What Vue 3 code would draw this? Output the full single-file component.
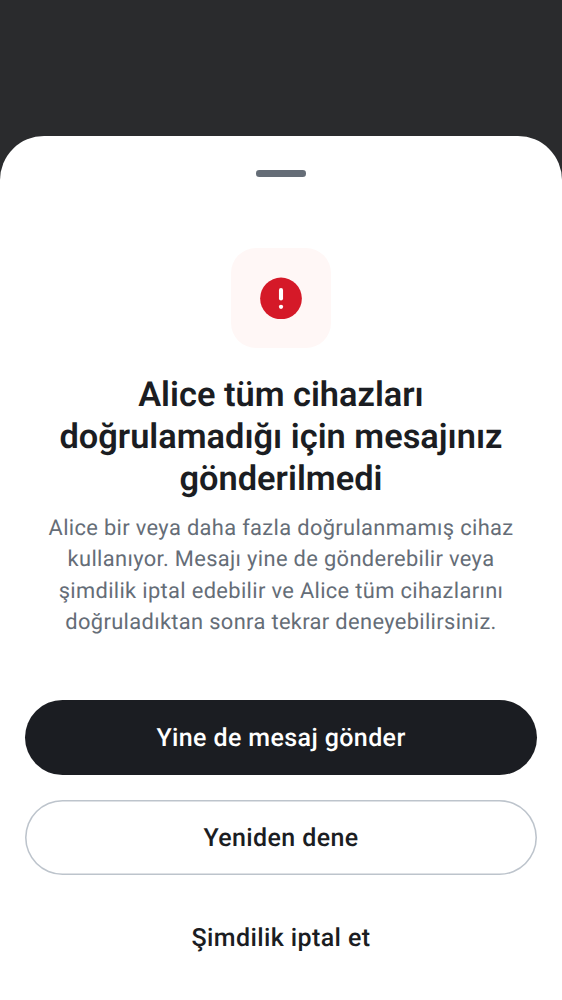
<script setup>
const titleLines = ['Alice tüm cihazları', 'doğrulamadığı için mesajınız', 'gönderilmedi']
const bodyLines = [
  'Alice bir veya daha fazla doğrulanmamış cihaz',
  'kullanıyor. Mesajı yine de gönderebilir veya',
  'şimdilik iptal edebilir ve Alice tüm cihazlarını',
  'doğruladıktan sonra tekrar deneyebilirsiniz.',
]
</script>

<template>
  <div class="screen">
    <section class="sheet">
      <div class="handle"></div>
      <div class="badge">
        <svg width="42" height="42" viewBox="0 0 42 42">
          <circle cx="21" cy="21.4" r="20.85" fill="#d51928" />
          <path d="M21 13.1v8.3" stroke="#fff" stroke-width="4.1" stroke-linecap="round" />
          <circle cx="21" cy="29.8" r="2.15" fill="#fff" />
        </svg>
      </div>
      <h1 class="title"><span v-for="line in titleLines" :key="line">{{ line }}</span></h1>
      <p class="body"><span v-for="line in bodyLines" :key="line">{{ line }}</span></p>
      <div class="actions">
        <button class="btn primary">Yine de mesaj gönder</button>
        <button class="btn outline">Yeniden dene</button>
        <button class="btn text">Şimdilik iptal et</button>
      </div>
    </section>
  </div>
</template>

<style>
body { margin: 0; }
</style>

<style scoped>
.screen {
  box-sizing: border-box;
  height: 1000px;
  padding-top: 136px;
  background: #2a2b2d;
  font-family: Roboto, sans-serif;
  text-rendering: geometricPrecision;
  overflow: hidden;
}
.sheet {
  box-sizing: border-box;
  height: 864px;
  padding: 34px 25px 0;
  border-radius: 44px 44px 0 0;
  background: #fff;
  display: flex;
  flex-direction: column;
  align-items: center;
}
.handle { width: 50px; height: 6.5px; border-radius: 3.25px; background: #656d77; }
.badge {
  width: 100px;
  height: 100px;
  margin-top: 71.5px;
  border-radius: 25px;
  background: #fff7f6;
  display: flex;
  align-items: center;
  justify-content: center;
}
.title, .body { margin: 0; text-align: center; white-space: nowrap; }
.title span, .body span { display: block; }
.title {
  margin-top: 26.3px;
  color: #1b1d22;
  font-size: 34.375px;
  font-weight: 600;
  line-height: 42px;
}
.body {
  height: 125px;
  margin-top: 12.8px;
  color: #656d77;
  font-size: 21.875px;
  line-height: 31.25px;
  letter-spacing: 0.345px;
}
.actions {
  width: 100%;
  margin-top: 61.9px;
  display: flex;
  flex-direction: column;
  gap: 25px;
}
.btn {
  box-sizing: border-box;
  height: 75px;
  padding: 2px 0 0;
  border: 0;
  border-radius: 38px;
  background: transparent;
  color: #1b1d22;
  font: 500 25px/37px Roboto, sans-serif;
  letter-spacing: 0.39px;
  text-rendering: geometricPrecision;
}
.primary { background: #1b1d22; color: #fff; }
.outline { box-shadow: inset 0 0 0 1.56px #bdc4cc; }
</style>
